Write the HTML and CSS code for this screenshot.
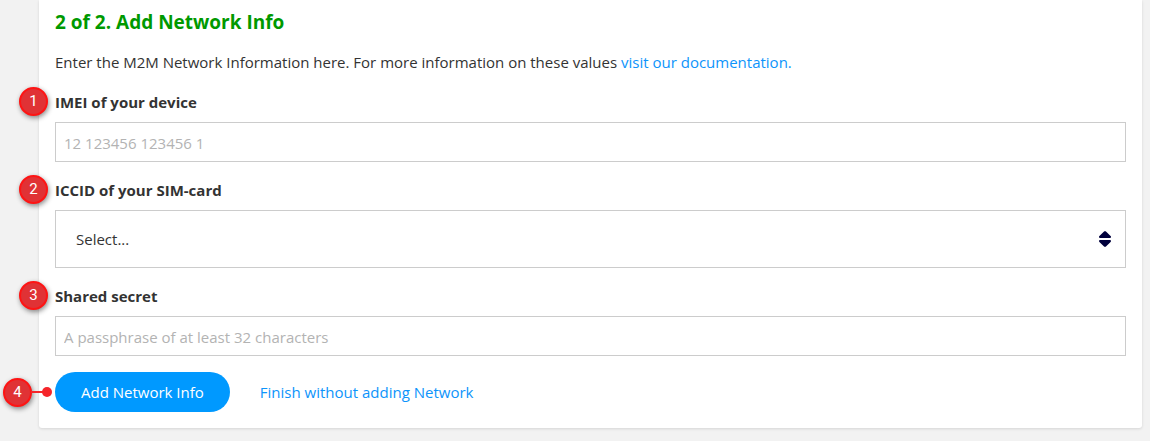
FILE: index.html
```html
<!DOCTYPE html>
<html lang="en">
<head>
    <meta charset="UTF-8">
    <meta name="viewport" content="width=device-width, initial-scale=1.0">
    <title>Add Network Info</title>
    <link rel="stylesheet" href="styles.css">
</head>
<body>
    <main class="card">
        <h2 class="title">2 of 2. Add Network Info</h2>
        <p class="intro">Enter the M2M Network Information here. For more information on these values <a href="#">visit our documentation.</a></p>

        <form class="network-form">
            <div class="field">
                <span class="step">1</span>
                <label for="imei">IMEI of your device</label>
                <input type="text" id="imei" placeholder="12 123456 123456 1">
            </div>

            <div class="field">
                <span class="step">2</span>
                <label for="iccid">ICCID of your SIM-card</label>
                <div class="select-wrap">
                    <select id="iccid">
                        <option>Select...</option>
                    </select>
                    <svg class="select-icon" width="12" height="16" viewBox="0 0 12 16" aria-hidden="true">
                        <path d="M5.3 .3h1.4L11.6 5q.6.6.4 1.3-.2.7-1 .7H1Q.2 7 0 6.3-.2 5.600.4 5zM1 9h10q.8 0 1 .7.2.7-.4 1.3L6.700 15.700H5.300L.4 11Q-.2 10.400 0 9.700.2 9 1 9z" fill="#00003c"/>
                    </svg>
                </div>
            </div>

            <div class="field">
                <span class="step">3</span>
                <label for="secret">Shared secret</label>
                <input type="text" id="secret" placeholder="A passphrase of at least 32 characters">
            </div>

            <div class="actions">
                <span class="step step-line">4</span>
                <button type="button" class="btn">Add Network Info</button>
                <a href="#">Finish without adding Network</a>
            </div>
        </form>
    </main>
</body>
</html>
```
FILE: styles.css
```css
* {
    margin: 0;
    padding: 0;
    box-sizing: border-box;
}

body {
    font-family: 'Segoe UI', 'Open Sans', sans-serif;
    font-size: 15px;
    line-height: 24px;
    background: #f2f2f2;
    color: #333;
}

a {
    color: #0d94fb;
    text-decoration: none;
}

.card {
    margin: 0 8px 12px 39px;
    padding: 10px 16px 16px;
    background: #fff;
    border-radius: 0 0 3px 3px;
    box-shadow: 0 1px 3px rgba(0, 0, 0, 0.12);
}

.title {
    margin-bottom: 16px;
    font-size: 19px;
    font-weight: 700;
    line-height: 24px;
    color: #090;
}

.intro {
    margin-bottom: 16px;
}

.network-form {
    display: flex;
    flex-direction: column;
    gap: 16px;
}

.field {
    position: relative;
    display: flex;
    flex-direction: column;
    gap: 8px;
}

.field label {
    font-weight: 700;
}

.field input,
.field select {
    width: 100%;
    border: 1px solid #ccc;
    border-radius: 0;
    background: #fff;
    font: inherit;
    color: #333;
}

.field input {
    height: 40px;
    padding: 2px 8px 0;
}

.field input::placeholder {
    color: #b3b3b3;
    opacity: 1;
}

.select-wrap {
    position: relative;
    display: flex;
}

.field select {
    height: 58px;
    padding: 0 40px 0 20px;
    appearance: none;
}

.select-icon {
    position: absolute;
    top: 21px;
    right: 15px;
    pointer-events: none;
}

.actions {
    position: relative;
    display: flex;
    align-items: center;
    gap: 30px;
}

.btn {
    height: 40px;
    padding: 0 26px;
    border: none;
    border-radius: 20px;
    background: #09f;
    color: #fff;
    font: inherit;
    cursor: pointer;
}

/* Numbered markers in the left gutter */
.step {
    position: absolute;
    top: -3px;
    left: -36px;
    width: 29px;
    height: 29px;
    border: 2px solid #fe1414;
    border-radius: 50%;
    background: #e03235;
    box-shadow: 1px 2px 5px rgba(0, 0, 0, 0.45);
    color: #fff;
    font-family: Roboto, sans-serif;
    font-size: 15px;
    line-height: 25px;
    text-align: center;
}

.step-line {
    top: 6px;
    left: -52px;
}

.step-line::before,
.step-line::after {
    content: "";
    position: absolute;
    background: #f5252a;
}

.step-line::before {
    top: 11px;
    left: 26px;
    width: 14px;
    height: 2px;
}

.step-line::after {
    top: 7px;
    left: 37px;
    width: 10px;
    height: 10px;
    border-radius: 50%;
}
```
